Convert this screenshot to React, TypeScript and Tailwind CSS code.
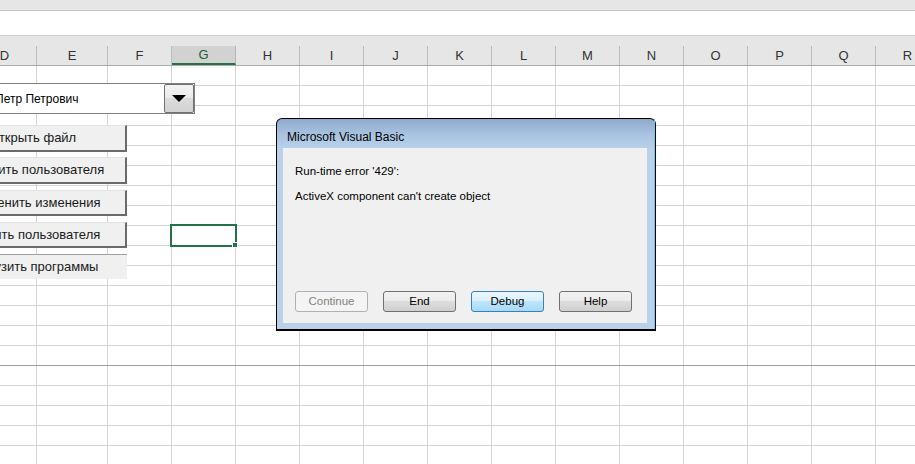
const columns = [
  { name: 'D', w: 'w-[64px]' },
  { name: 'E', w: 'w-[71px]' },
  { name: 'F', w: 'w-[64px]' },
  { name: 'G', w: 'w-[64px]' },
  { name: 'H', w: 'w-[64px]' },
  { name: 'I', w: 'w-[64px]' },
  { name: 'J', w: 'w-[64px]' },
  { name: 'K', w: 'w-[64px]' },
  { name: 'L', w: 'w-[64px]' },
  { name: 'M', w: 'w-[64px]' },
  { name: 'N', w: 'w-[64px]' },
  { name: 'O', w: 'w-[64px]' },
  { name: 'P', w: 'w-[64px]' },
  { name: 'Q', w: 'w-[64px]' },
  { name: 'R', w: 'w-[64px]' },
];

const rows = Array.from({ length: 20 }, (_, i) => i + 1);

const sheetButtons = [
  { label: 'Открыть файл', top: 'top-[125px] h-[27px]' },
  { label: 'Добавить пользователя', top: 'top-[157px] h-[27px]' },
  { label: 'Применить изменения', top: 'top-[190px] h-[26px]' },
  { label: 'Удалить пользователя', top: 'top-[222px] h-[26px]' },
];

function DialogButton({ label, kind }: { label: string; kind: 'normal' | 'default' | 'disabled' }) {
  const styles = {
    normal:
      'border-[#707070] text-black bg-[linear-gradient(#f2f2f2_0%,#ebebeb_50%,#dddddd_50%,#cfcfcf_100%)]',
    default:
      'border-[#3c7fb1] text-black bg-[linear-gradient(#eaf6fd_0%,#d9f0fc_50%,#bee6fd_50%,#a7d9f5_100%)]',
    disabled: 'border-[#adb2b5] text-[#838383] bg-[#f4f4f4]',
  };
  return (
    <div
      className={`w-[73px] h-[21px] rounded-[3px] border flex items-center justify-center text-[11.5px] leading-none ${styles[kind]}`}
    >
      {label}
    </div>
  );
}

export default function App() {
  return (
    <div className="relative w-[915px] h-[464px] overflow-hidden bg-white font-['Liberation_Sans',Arial,sans-serif]">
      {/* ribbon edge + formula bar */}
      <div className="h-[11px] bg-[#e6e6e6] border-b border-[#c6c6c6]" />
      <div className="h-[25px] bg-white border-b border-[#d0d0d0]" />
      <div className="h-[10px] bg-[#e6e6e6]" />

      {/* column headers */}
      <div className="flex h-[20px] ml-[-27px] bg-[#e6e6e6] border-b border-[#ababab]">
        {columns.map((c) =>
          c.name === 'G' ? (
            <div
              key={c.name}
              className={`${c.w} shrink-0 h-[19px] bg-[#d2d2d2] border-r border-[#b5b5b5] border-b-2 border-b-[#217346] flex items-center justify-center text-[13px] text-[#1f5b38]`}
            >
              {c.name}
            </div>
          ) : (
            <div
              key={c.name}
              className={`${c.w} shrink-0 h-[19px] border-r border-[#bcbcbc] flex items-center justify-center text-[13px] text-[#333]`}
            >
              {c.name}
            </div>
          ),
        )}
      </div>

      {/* cells */}
      {rows.map((r) => (
        <div
          key={r}
          className={`flex h-[20px] ml-[-27px] border-b ${r === 15 ? 'border-[#9e9e9e]' : 'border-[#d4d4d4]'}`}
        >
          {columns.map((c) => (
            <div key={c.name} className={`${c.w} shrink-0 border-r border-[#d4d4d4]`} />
          ))}
        </div>
      ))}

      {/* selected cell */}
      <div className="absolute left-[170px] top-[224px] w-[67px] h-[23px] border-2 border-[#217346]" />
      <div className="absolute left-[232px] top-[242px] w-[6px] h-[6px] bg-[#217346] border border-white" />

      {/* combo box */}
      <div className="absolute left-[-10px] top-[83px] w-[205px] h-[31px] bg-white border border-[#7f7f7f] flex items-center">
        <span className="pl-[4px] text-[12px] text-black">Петр Петрович</span>
        <div className="absolute right-0 top-0 w-[30px] h-[29px] rounded-[2px] border border-[#707070] bg-[linear-gradient(#f3f3f3_0%,#ececec_45%,#dcdcdc_50%,#d2d2d2_100%)] flex items-center justify-center">
          <svg width="14" height="7" viewBox="0 0 14 7">
            <polygon points="0,0 14,0 7,7" fill="#000" />
          </svg>
        </div>
      </div>

      {/* sheet buttons */}
      {sheetButtons.map((b) => (
        <div
          key={b.label}
          className={`absolute left-[-61px] w-[188px] ${b.top} bg-[#f0f0f0] border-t border-l border-[#e3e3e3] border-r-2 border-b-2 border-r-[#6a6a6a] border-b-[#6a6a6a] flex items-center justify-center text-[13px] text-[#1a1a1a]`}
        >
          {b.label}
        </div>
      ))}
      <div className="absolute left-[-61px] top-[254px] w-[188px] h-[25px] bg-[#f0f0f0] border-t border-[#a0a0a0] flex items-center justify-center text-[13px] text-[#1a1a1a]">
        Загрузить программы
      </div>

      {/* VBA error dialog */}
      <div className="absolute left-[276px] top-[118px] w-[380px] h-[213px] rounded-t-[6px] border border-black border-b-2 bg-[linear-gradient(#8ea9cb_0px,#a9c3e1_16px,#b9d1ea_30px,#b9d1ea_100%)] flex flex-col">
        <div className="h-full flex flex-col border-r border-[#59cff2]">
          <div className="h-[29px] shrink-0 pl-[10px] pt-[11px] text-[12px] leading-[15px] text-black">
            Microsoft Visual Basic
          </div>
          <div className="flex-1 ml-[6px] mr-[7px] mb-[6px] bg-[#f0f0f0] flex flex-col">
            <div className="pl-[12px] pt-[16px] text-[11.5px] leading-[14px] text-black">
              <p>Run-time error '429':</p>
              <p className="mt-[11px]">ActiveX component can't create object</p>
            </div>
            <div className="mt-auto pb-[11px] pl-[12px] flex gap-[15px]">
              <DialogButton label="Continue" kind="disabled" />
              <DialogButton label="End" kind="normal" />
              <DialogButton label="Debug" kind="default" />
              <DialogButton label="Help" kind="normal" />
            </div>
          </div>
        </div>
      </div>
    </div>
  );
}
